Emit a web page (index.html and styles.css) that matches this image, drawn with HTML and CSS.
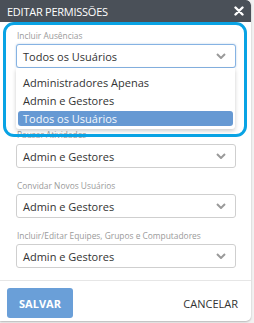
FILE: index.html
```html
<!DOCTYPE html>
<html>
<head>
<meta charset="utf-8">
<link rel="stylesheet" href="styles.css">
</head>
<body>
<div class="dialog">
  <div class="header">
    <span class="title">EDITAR PERMISSÕES</span>
    <svg class="close" width="10" height="10" viewBox="0 0 10 10"><path d="M1.5 1.5 L8.5 8.5 M8.5 1.5 L1.5 8.5" stroke="#fff" stroke-width="2.4" stroke-linecap="round"/></svg>
  </div>
  <div class="body">
    <div class="field open">
      <div class="label">Incluir Ausências</div>
      <div class="select focus"><span>Todos os Usuários</span><svg class="chev" width="10" height="6" viewBox="0 0 10 6"><path d="M1 1 L5 5 L9 1" stroke="#9a9a9a" stroke-width="2" fill="none"/></svg></div>
      <div class="menu">
        <div class="opt">Administradores Apenas</div>
        <div class="opt">Admin e Gestores</div>
        <div class="opt sel">Todos os Usuários</div>
      </div>
      <div class="ring"></div>
    </div>
    <div class="field covered">
      <div class="label">Aprovar Ausências</div>
      <div class="select"><span>Admin e Gestores</span></div>
    </div>
    <div class="field">
      <div class="label under">Pausar Atividades</div>
      <div class="select"><span>Admin e Gestores</span><svg class="chev" width="10" height="6" viewBox="0 0 10 6"><path d="M1 1 L5 5 L9 1" stroke="#9a9a9a" stroke-width="2" fill="none"/></svg></div>
    </div>
    <div class="field">
      <div class="label">Convidar Novos Usuários</div>
      <div class="select"><span>Admin e Gestores</span><svg class="chev" width="10" height="6" viewBox="0 0 10 6"><path d="M1 1 L5 5 L9 1" stroke="#9a9a9a" stroke-width="2" fill="none"/></svg></div>
    </div>
    <div class="field">
      <div class="label">Incluir/Editar Equipes, Grupos e Computadores</div>
      <div class="select"><span>Admin e Gestores</span><svg class="chev" width="10" height="6" viewBox="0 0 10 6"><path d="M1 1 L5 5 L9 1" stroke="#9a9a9a" stroke-width="2" fill="none"/></svg></div>
    </div>
  </div>
  <div class="footer">
    <button class="save">SALVAR</button>
    <button class="cancel">CANCELAR</button>
  </div>
</div>
</body>
</html>
```
FILE: styles.css
```css
html, body {
  margin: 0;
  padding: 0;
  background: #f2f2f2;
}
body {
  font-family: "Open Sans", "Noto Sans", sans-serif;
  width: 254px;
  height: 323px;
  overflow: hidden;
}
.dialog {
  width: 251px;
  height: 321px;
  background: #fff;
  border-radius: 0 5px 5px 0;
  box-shadow: 0 1px 2px rgba(0,0,0,0.25);
  display: flex;
  flex-direction: column;
  overflow: hidden;
}
.header {
  height: 22px;
  background: #4a5058;
  display: flex;
  align-items: center;
  justify-content: space-between;
  padding: 0 7px 0 7px;
  border-radius: 0 5px 0 0;
}
.title {
  color: #fff;
  font-size: 11px;
  letter-spacing: -0.25px;
}
.close {
  display: block;
  margin-top: -1px;
}
.body {
  padding: 7px 15px 0 16px;
  flex: 1;
}
.field {
  margin-bottom: 11px;
  position: relative;
}
.covered {
  visibility: hidden;
}
.label {
  font-size: 8.4px;
  color: #9a9a9a;
  line-height: 14px;
  height: 14px;
  padding-left: 1px;
  margin-bottom: 1px;
  white-space: nowrap;
}
.label.under {
  line-height: 11px;
  margin-bottom: 4px;
  height: 11px;
}
.select {
  height: 24px;
  box-sizing: border-box;
  border: 1px solid #cfcfcf;
  border-radius: 3px;
  display: flex;
  align-items: center;
  justify-content: space-between;
  padding: 0 9px 0 6px;
  font-size: 11px;
  color: #333;
  background: #fff;
}
.select.focus {
  border-color: #86b3e3;
  box-shadow: 0 0 2px rgba(102,153,210,0.5);
}
.menu {
  position: absolute;
  left: 0;
  right: 1px;
  top: 39px;
  background: #fff;
  border-radius: 0 0 3px 3px;
  box-shadow: 0 2px 4px rgba(0,0,0,0.2);
  padding: 6px 2px 3px 2px;
  z-index: 2;
}
.opt {
  font-size: 11px;
  color: #333;
  height: 18px;
  line-height: 18px;
  padding-left: 5px;
}
.opt.sel {
  background: #6699d3;
  color: #f4f8fc;
  border-radius: 3px;
  height: 15px;
  line-height: 15px;
  margin-top: 1px;
}
.ring {
  position: absolute;
  left: -13px;
  right: -11px;
  top: -7px;
  height: 115px;
  box-sizing: border-box;
  border: 3px solid #09a3e4;
  border-radius: 11px;
  z-index: 3;
  pointer-events: none;
}
.footer {
  border-top: 1px solid #e6e6e6;
  height: 40px;
  display: flex;
  align-items: center;
  justify-content: space-between;
  padding: 0 13px 0 7px;
}
.save {
  width: 66px;
  height: 30px;
  border: none;
  border-radius: 3px;
  background: #6a9fd8;
  color: #fff;
  font-family: inherit;
  font-weight: 700;
  font-size: 11px;
  margin-top: 4px;
}
.cancel {
  border: none;
  background: none;
  color: #333;
  font-family: inherit;
  font-size: 11px;
  padding: 0;
  margin-top: 4px;
}
```
